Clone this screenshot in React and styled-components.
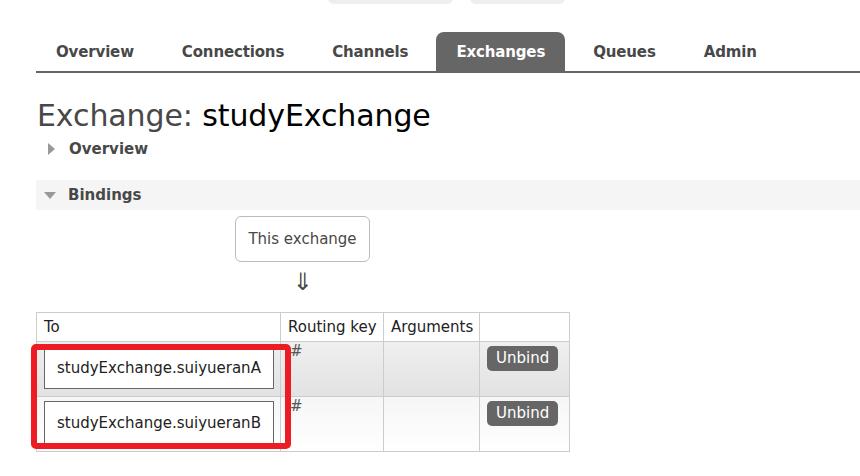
import React from "react";
import styled, { createGlobalStyle } from "styled-components";

const Global = createGlobalStyle`
  html, body { margin: 0; padding: 0; background: #fff; }
  body { font-family: "DejaVu Sans", Verdana, sans-serif; color: #484848; overflow: hidden; }
`;

const Page = styled.div`
  width: 860px;
  height: 476px;
  overflow: hidden;
  padding-left: 36px;
  box-sizing: border-box;
`;

const TopBar = styled.div`
  display: flex;
  height: 4px;
  overflow: hidden;
  align-items: flex-end;
`;

const TopPill = styled.div`
  margin-left: ${(p) => p.$ml}px;
  width: ${(p) => p.$w}px;
  height: 30px;
  flex: none;
  align-self: flex-end;
  background: #eee;
  border-radius: 0 0 6px 6px;
`;

const Nav = styled.div`
  display: flex;
  margin-top: 28px;
  border-bottom: 2px solid #666;
  height: 39px;
  gap: 8px;
`;

const Tab = styled.div`
  padding: 0 20px;
  height: 39px;
  line-height: 40px;
  font-size: 15px;
  font-weight: bold;
  letter-spacing: -0.15px;
  color: ${(p) => (p.$active ? "#fff" : "#484848")};
  background: ${(p) => (p.$active ? "#666" : "transparent")};
  border-radius: 8px 8px 0 0;
`;

const Heading = styled.h1`
  margin: 25px 0 0 1px;
  font-size: 30px;
  font-weight: normal;
  line-height: 36px;
  color: #484848;
  letter-spacing: -0.1px;
  span { color: #000; }
`;

const SectionHead = styled.div`
  display: flex;
  align-items: center;
  height: 30px;
  margin-top: ${(p) => p.$mt}px;
  background: ${(p) => (p.$open ? "#f5f5f5" : "transparent")};
  font-size: 15px;
  font-weight: bold;
  color: #484848;
`;

const Tri = styled.span`
  width: 0;
  height: 0;
  margin-left: ${(p) => (p.$open ? 8 : 12)}px;
  margin-right: ${(p) => (p.$open ? 12 : 14)}px;
  ${(p) =>
    p.$open
      ? "border-left: 6px solid transparent; border-right: 6px solid transparent; border-top: 7px solid #999;"
      : "border-top: 6px solid transparent; border-bottom: 6px solid transparent; border-left: 7px solid #999;"}
`;

const Diagram = styled.div`
  display: flex;
  flex-direction: column;
  align-items: center;
  width: 533px;
  margin-top: 6px;
`;

const ExchangeBox = styled.div`
  border: 1px solid #bbb;
  border-radius: 6px;
  padding: 0 12px;
  height: 44px;
  line-height: 44px;
  font-size: 15px;
  color: #484848;
`;

const Arrow = styled.div`
  font-size: 24px;
  line-height: 28px;
  height: 28px;
  margin-top: 6px;
  color: #484848;
`;

const TableWrap = styled.div`
  position: relative;
  width: 533px;
  margin-top: 16px;
`;

const Table = styled.table`
  border-collapse: collapse;
  table-layout: fixed;
  width: 533px;
  font-size: 15px;
  color: #222;
  td, th { border: 1px solid #ccc; padding: 0; white-space: nowrap; overflow: hidden; }
`;

const Th = styled.th`
  height: 29px;
  text-align: left;
  font-weight: normal;
  padding: 0 7px !important;
  background: #fff;
  box-sizing: border-box;
`;

const Tr = styled.tr`
  background: ${(p) =>
    p.$alt
      ? "linear-gradient(#f6f6f6, #fff)"
      : "linear-gradient(#efefef, #e2e2e2)"};
`;

const Td = styled.td`
  vertical-align: top;
  height: 55px;
  color: #555;
  padding: ${(p) => p.$pad || "0"} !important;
  box-sizing: border-box;
`;

const NameBox = styled.div`
  margin: 4px 6px 0 7px;
  height: 43px;
  line-height: 43px;
  background: #fff;
  border: 1px solid #666;
  padding-left: 12px;
  font-size: 15px;
  color: #222;
  box-sizing: border-box;
  white-space: nowrap;
`;

const UnbindButton = styled.button`
  margin: 4px 0 0 7px;
  background: #666;
  color: #fff;
  border: none;
  border-radius: 5px;
  font-family: "DejaVu Sans", Verdana, sans-serif;
  font-size: 15px;
  padding: 0 9px;
  height: 25px;
  line-height: 25px;
`;

const Highlight = styled.div`
  position: absolute;
  left: -5px;
  top: 32px;
  width: 260px;
  height: 105px;
  border: 6px solid #ec1c24;
  border-radius: 5px;
  box-sizing: border-box;
  pointer-events: none;
`;

const rows = [
  { name: "studyExchange.suiyueranA", key: "#" },
  { name: "studyExchange.suiyueranB", key: "#" },
];

const cols = [244, 103, 96, 90];

export default function App() {
  return (
    <Page>
      <Global />
      <TopBar>
        <TopPill $ml={292} $w={125} />
        <TopPill $ml={17} $w={95} />
      </TopBar>
      <Nav>
        <Tab>Overview</Tab>
        <Tab>Connections</Tab>
        <Tab>Channels</Tab>
        <Tab $active>Exchanges</Tab>
        <Tab>Queues</Tab>
        <Tab>Admin</Tab>
      </Nav>
      <Heading>
        Exchange: <span>studyExchange</span>
      </Heading>
      <SectionHead $mt={0}>
        <Tri />
        Overview
      </SectionHead>
      <SectionHead $open $mt={16}>
        <Tri $open />
        Bindings
      </SectionHead>
      <Diagram>
        <ExchangeBox>This exchange</ExchangeBox>
        <Arrow>⇓</Arrow>
      </Diagram>
      <TableWrap>
        <Table>
          <colgroup>
            {cols.map((w, i) => (
              <col key={i} style={{ width: w }} />
            ))}
          </colgroup>
          <thead>
            <tr>
              <Th>To</Th>
              <Th>Routing key</Th>
              <Th>Arguments</Th>
              <Th></Th>
            </tr>
          </thead>
          <tbody>
            {rows.map((r, i) => (
              <Tr key={r.name} $alt={i % 2 === 1}>
                <Td>
                  <NameBox>{r.name}</NameBox>
                </Td>
                <Td $pad="0 0 0 9px">{r.key}</Td>
                <Td></Td>
                <Td>
                  <UnbindButton>Unbind</UnbindButton>
                </Td>
              </Tr>
            ))}
          </tbody>
        </Table>
        <Highlight />
      </TableWrap>
    </Page>
  );
}
